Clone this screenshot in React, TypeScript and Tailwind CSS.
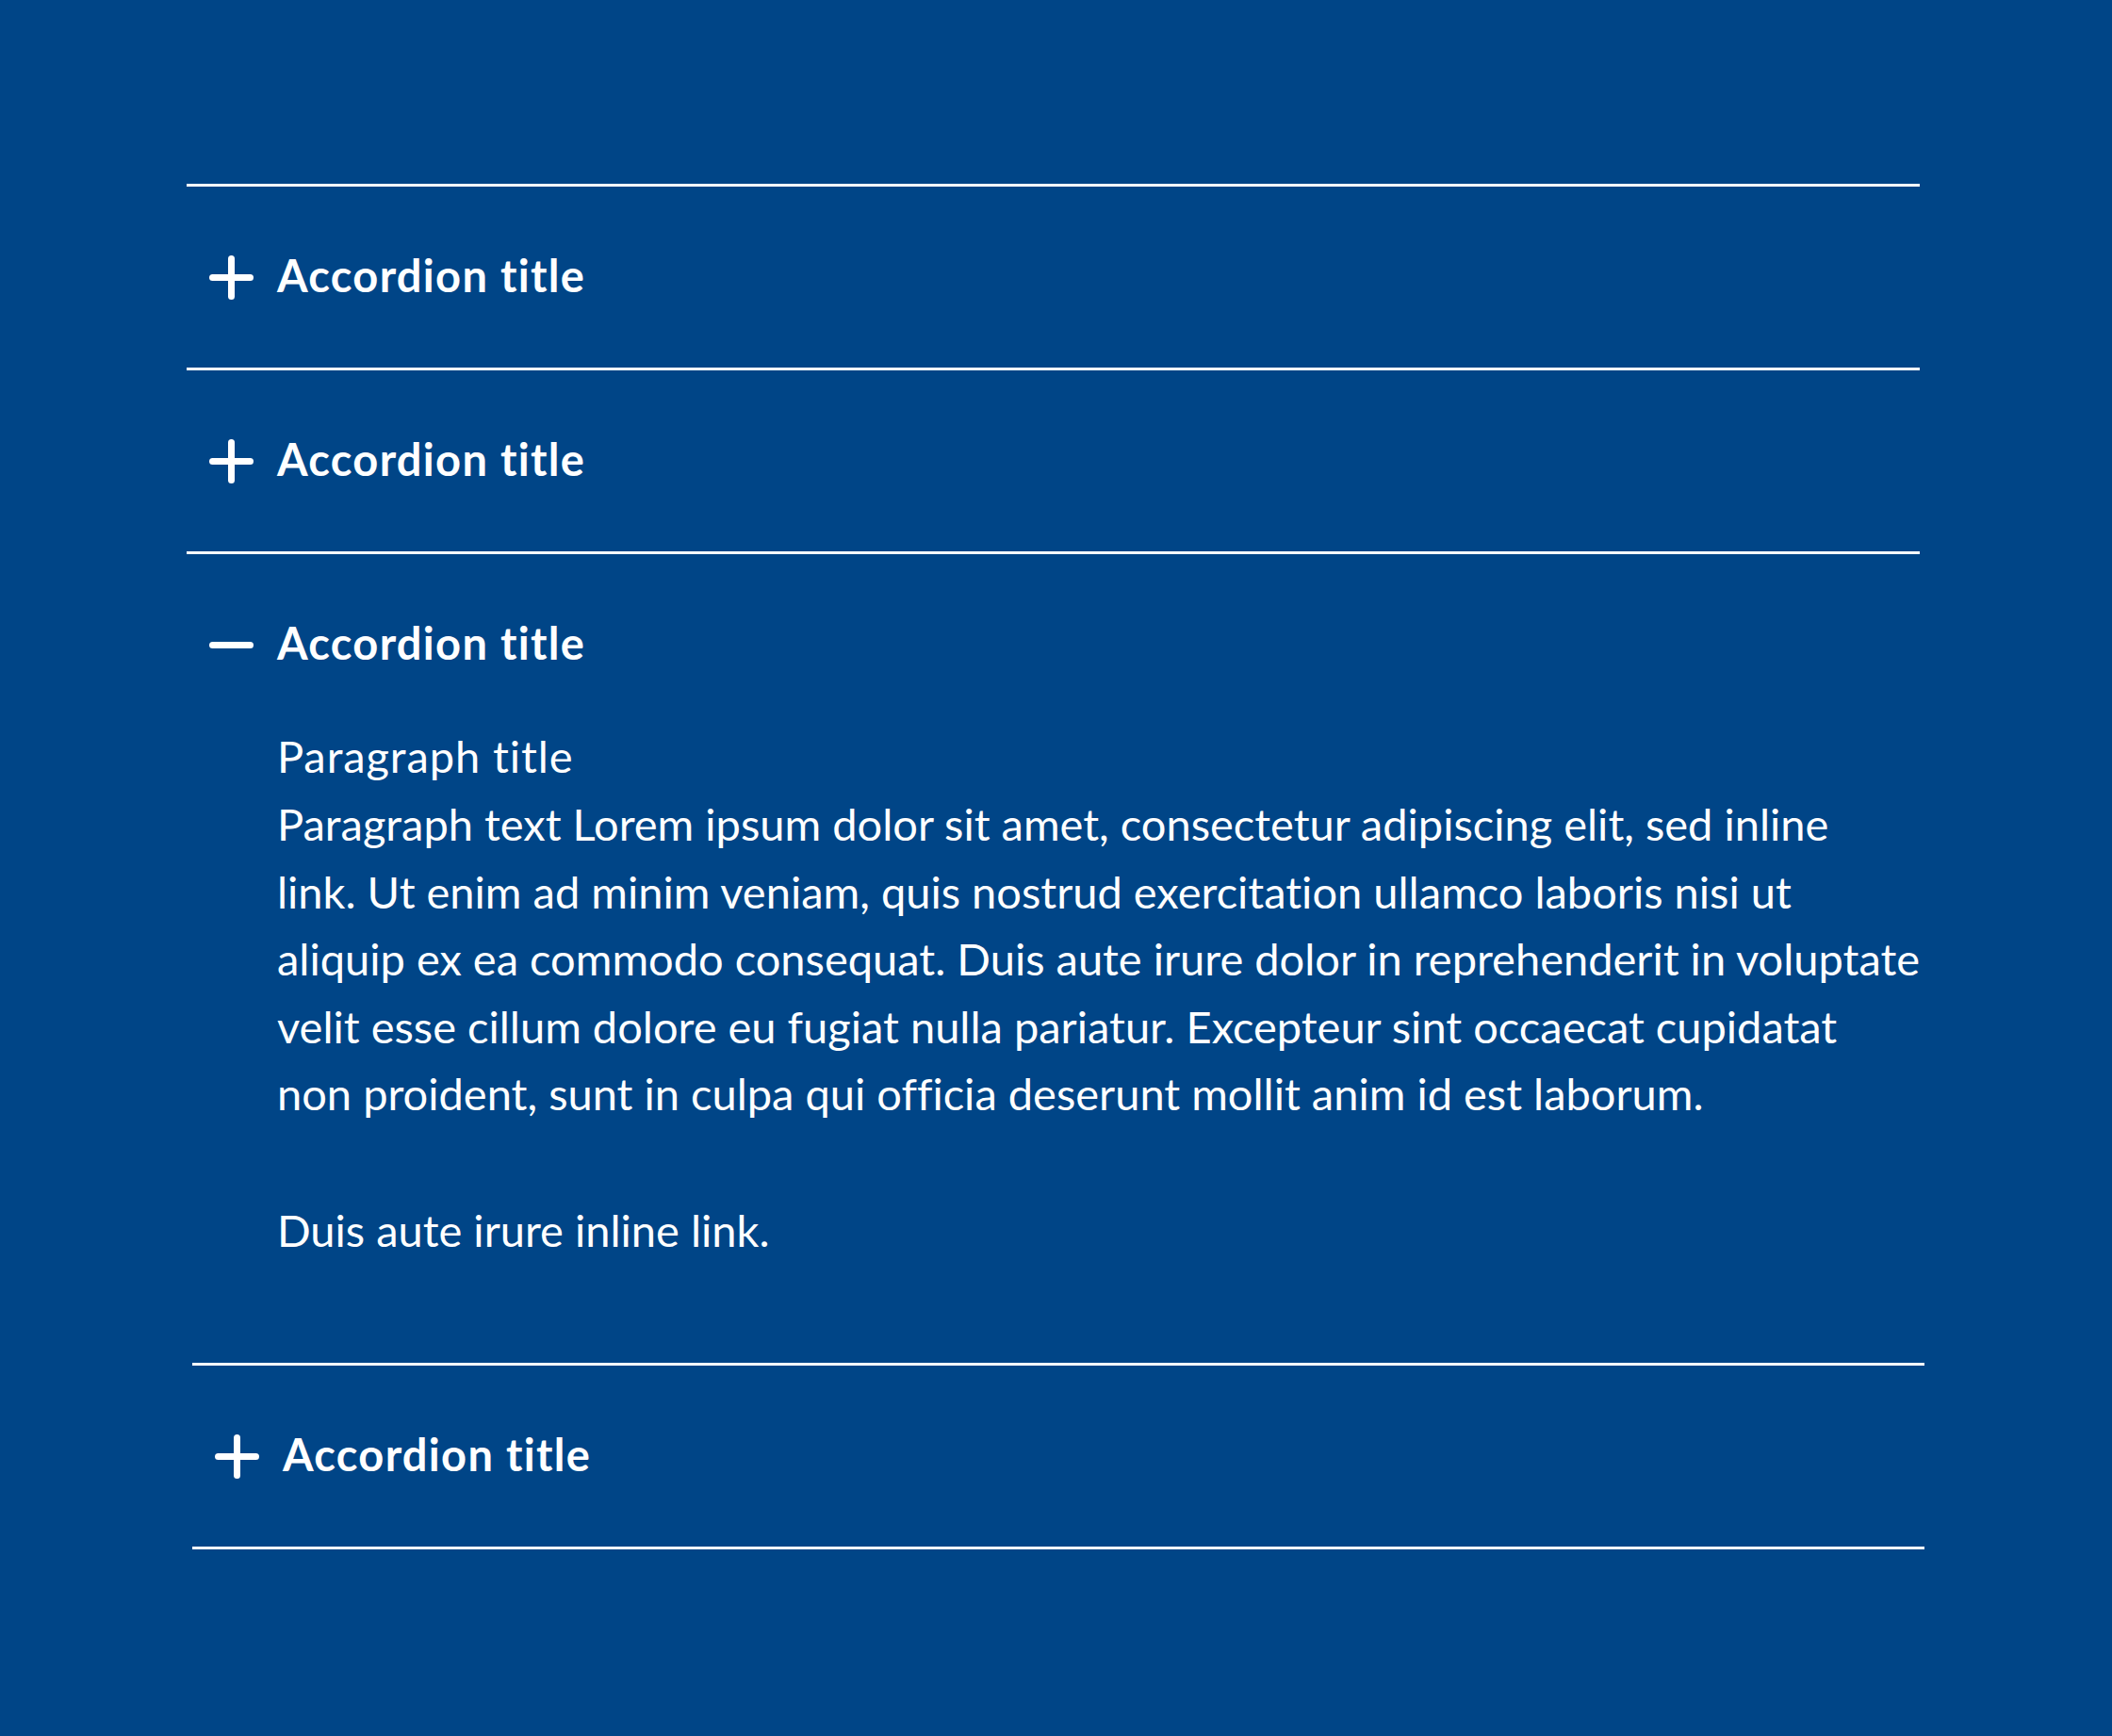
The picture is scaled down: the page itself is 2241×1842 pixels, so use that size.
import React from "react";

function PlusIcon() {
  return (
    <svg width="47" height="47" viewBox="0 0 47 47" className="shrink-0">
      <line x1="3.5" y1="23.5" x2="43.5" y2="23.5" stroke="white" strokeWidth="7" strokeLinecap="round" />
      <line x1="23.5" y1="3.5" x2="23.5" y2="43.5" stroke="white" strokeWidth="7" strokeLinecap="round" />
    </svg>
  );
}

function MinusIcon() {
  return (
    <svg width="47" height="47" viewBox="0 0 47 47" className="shrink-0">
      <line x1="3.5" y1="23.5" x2="43.5" y2="23.5" stroke="white" strokeWidth="7" strokeLinecap="round" />
    </svg>
  );
}

function Header({ open }: { open: boolean }) {
  return (
    <div className="flex h-[192px] items-center pl-[24px]">
      {open ? <MinusIcon /> : <PlusIcon />}
      <span className="ml-[25px] pb-[3px] font-['Lato',sans-serif] text-[47px] font-bold leading-none tracking-[1.3px] text-white [font-variant-ligatures:none]">
        Accordion title
      </span>
    </div>
  );
}

const lines = [
  "Paragraph text Lorem ipsum dolor sit amet, consectetur adipiscing elit, sed inline",
  "link. Ut enim ad minim veniam, quis nostrud exercitation ullamco laboris nisi ut",
  "aliquip ex ea commodo consequat. Duis aute irure dolor in reprehenderit in voluptate",
  "velit esse cillum dolore eu fugiat nulla pariatur. Excepteur sint occaecat cupidatat",
  "non proident, sunt in culpa qui officia deserunt mollit anim id est laborum.",
];

export default function App() {
  return (
    <div className="min-h-screen w-full bg-[#004587] pt-[195px] pb-[198px] [font-variant-ligatures:none]">
      <div className="ml-[198px] w-[1839px]">
        <div className="border-t-[3px] border-white">
          <Header open={false} />
        </div>
        <div className="border-t-[3px] border-white">
          <Header open={false} />
        </div>
        <div className="border-t-[3px] border-white">
          <Header open={true} />
          <div className="-mt-[15px] pb-[105px] pl-[96px] text-white">
            <h3 className="font-['Lato',sans-serif] text-[47px] font-normal leading-[74px] tracking-[0.9px]">
              Paragraph title
            </h3>
            <p className="font-['Lato',sans-serif] text-[47px] leading-[71.5px] whitespace-nowrap">
              {lines.map((l, i) => (
                <React.Fragment key={i}>
                  {l}
                  {i < lines.length - 1 && <br />}
                </React.Fragment>
              ))}
            </p>
            <p className="mt-[73px] font-['Lato',sans-serif] text-[47px] leading-[71.5px]">
              Duis aute irure inline link.
            </p>
          </div>
        </div>
      </div>
      <div className="ml-[204px] w-[1838px] border-y-[3px] border-white">
        <Header open={false} />
      </div>
    </div>
  );
}
